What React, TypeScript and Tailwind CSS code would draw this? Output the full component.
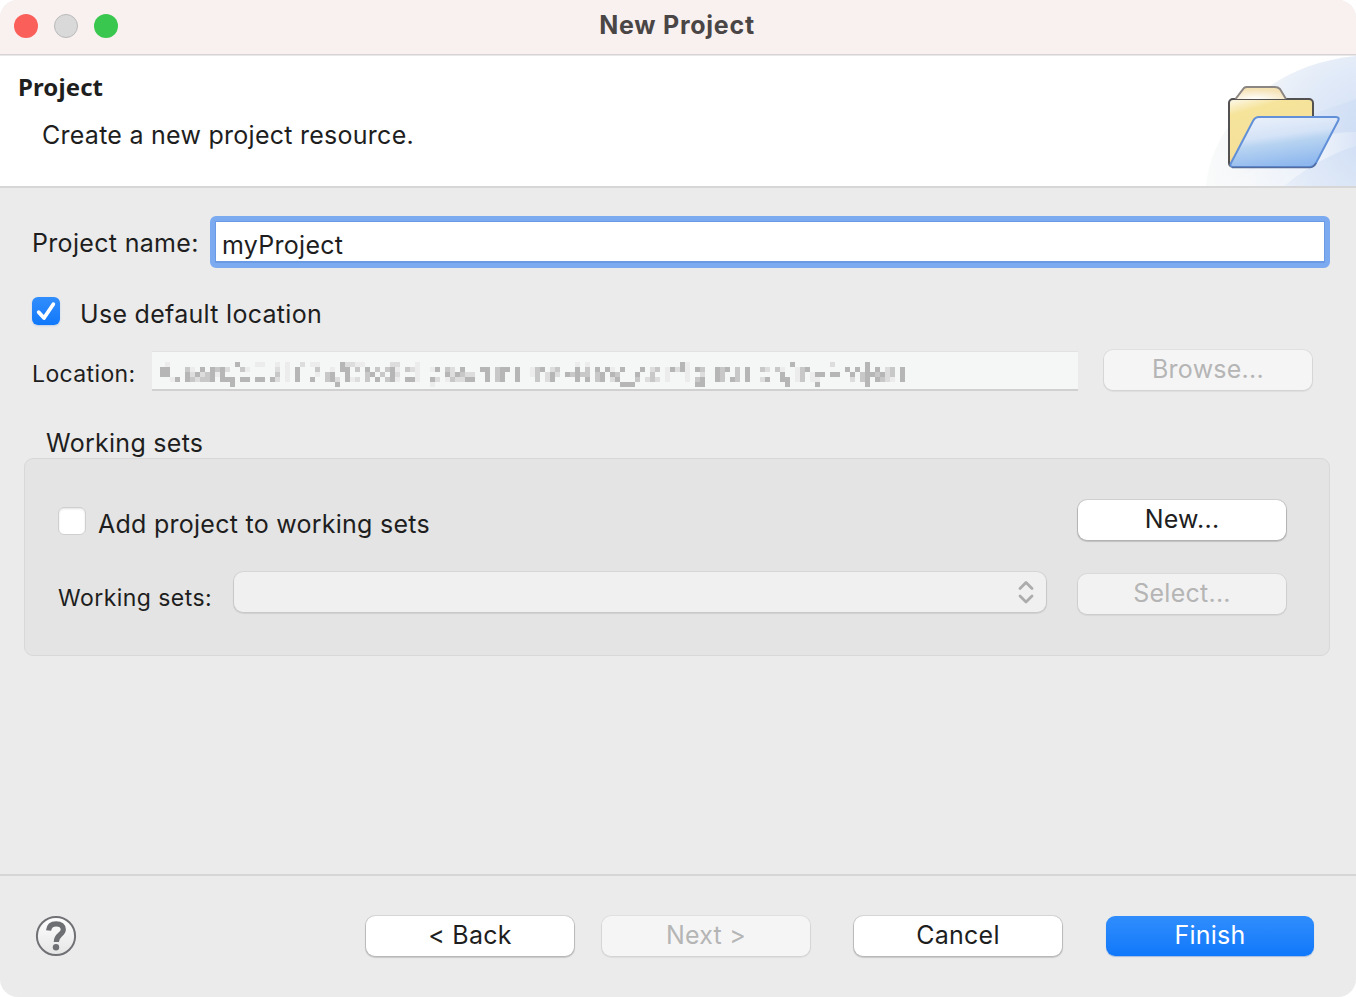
import type { ReactNode } from "react";

type Run = [column: number, length: number, shade: number];

const SHADES = ["", "#ececec", "#dddddd", "#c8c8c8", "#b6b6b6"];

const MOSAIC: Run[][] = [
  [
    [1, 1, 1], [15, 1, 4], [19, 2, 1], [23, 1, 1], [25, 1, 1], [28, 1, 2], [30, 2, 1], [36, 1, 4], [37, 2, 2], [39, 2, 1], [46, 2, 2],
    [51, 1, 1], [83, 1, 1], [85, 1, 1],
    [104, 1, 4], [105, 1, 1], [126, 1, 4], [134, 1, 2], [141, 1, 4],
  ],
  [
    [0, 2, 4], [5, 1, 3], [6, 1, 1], [8, 1, 4], [10, 1, 4], [11, 1, 3], [12, 1, 4], [13, 1, 2], [16, 1, 3], [17, 1, 1], [23, 1, 2], [25, 1, 1], [27, 1, 4], [31, 1, 3], [34, 1, 1], [36, 2, 4], [39, 1, 3], [41, 1, 4], [43, 1, 3], [45, 1, 3], [46, 1, 4], [47, 1, 1], [49, 1, 3],
    [50, 1, 2], [51, 1, 1], [54, 1, 1], [55, 1, 4], [57, 1, 3], [58, 1, 2], [60, 1, 4], [64, 2, 4], [67, 1, 3], [68, 2, 4], [71, 1, 4], [74, 1, 1], [75, 1, 3], [76, 1, 4], [78, 1, 2], [79, 1, 3], [83, 1, 4], [85, 1, 3], [87, 1, 4], [89, 1, 4], [90, 1, 1], [92, 1, 4], [96, 1, 4], [98, 1, 2], [99, 1, 3],
    [101, 1, 1], [102, 1, 4], [103, 1, 2], [104, 1, 4], [105, 1, 1], [107, 1, 4], [108, 1, 3], [111, 1, 4], [112, 1, 3], [113, 1, 4], [115, 1, 3], [117, 1, 4], [120, 1, 3], [121, 1, 2], [123, 1, 3], [124, 1, 1], [127, 1, 1], [128, 1, 3], [129, 1, 4], [137, 1, 4], [139, 1, 4], [141, 1, 4], [143, 1, 4], [145, 1, 2], [146, 1, 3], [148, 1, 4],
  ],
  [
    [0, 2, 4], [5, 1, 4], [6, 1, 2], [7, 1, 4], [8, 1, 2], [9, 1, 3], [10, 1, 4], [11, 1, 1], [12, 1, 4], [23, 1, 3], [25, 1, 1], [27, 1, 4], [31, 1, 1], [33, 1, 3], [34, 1, 4], [37, 1, 4], [41, 1, 3], [42, 1, 4], [44, 1, 3], [46, 1, 4], [47, 1, 2],
    [51, 1, 1], [57, 1, 4], [58, 1, 2], [59, 1, 4], [60, 1, 3], [61, 2, 2], [65, 1, 4], [67, 1, 3], [68, 1, 4], [71, 1, 4], [74, 1, 1], [75, 1, 3], [77, 1, 2], [78, 1, 4], [79, 1, 2], [81, 1, 4], [82, 1, 3], [83, 1, 4], [84, 2, 3], [87, 1, 3], [88, 1, 4], [90, 1, 4], [91, 1, 3], [95, 1, 4], [98, 1, 3],
    [101, 1, 1], [105, 1, 1], [108, 1, 2], [111, 1, 4], [112, 1, 3], [115, 1, 3], [117, 1, 4], [124, 1, 4], [127, 1, 1], [128, 1, 3], [130, 1, 1], [131, 2, 4], [134, 2, 4], [138, 1, 4], [140, 1, 3], [141, 2, 4], [143, 1, 3], [144, 1, 4], [145, 1, 2], [146, 1, 3], [148, 1, 4],
  ],
  [
    [2, 1, 1], [3, 1, 4], [5, 1, 4], [6, 1, 3], [7, 1, 2], [8, 2, 3], [10, 1, 4], [12, 3, 4], [16, 2, 4], [19, 2, 4], [22, 1, 4], [23, 1, 2], [25, 1, 1], [27, 1, 4], [30, 1, 4], [33, 1, 3], [34, 1, 4], [35, 1, 2], [37, 1, 4], [38, 1, 1], [39, 1, 2], [41, 1, 3], [43, 1, 4], [45, 1, 3], [46, 1, 4], [47, 1, 1], [49, 1, 4],
    [50, 1, 4], [51, 1, 1], [54, 1, 4], [55, 1, 2], [57, 1, 1], [58, 1, 3], [59, 2, 2], [61, 2, 4], [65, 1, 4], [67, 1, 3], [68, 1, 4], [71, 1, 4], [75, 1, 3], [77, 1, 2], [78, 1, 4], [83, 1, 4], [85, 1, 4], [87, 1, 3], [88, 1, 4], [90, 1, 2], [91, 1, 4], [95, 1, 3], [97, 1, 2], [98, 1, 3], [99, 1, 2],
    [101, 1, 1], [105, 1, 1], [107, 1, 3], [108, 1, 4], [111, 1, 4], [112, 1, 3], [114, 1, 4], [115, 1, 3], [117, 1, 4], [120, 1, 2], [121, 1, 4], [124, 2, 4], [127, 1, 1], [128, 1, 3], [130, 2, 1], [138, 1, 2], [140, 1, 3], [141, 1, 4], [143, 1, 4], [144, 1, 3], [145, 1, 2], [146, 1, 1], [148, 1, 4],
  ],
  [
    [14, 1, 4], [35, 1, 4], [54, 1, 1], [92, 3, 4], [107, 2, 4], [125, 1, 4], [131, 1, 4], [141, 1, 4],
  ],
];

function RedactedPath() {
  return (
    <svg width="745" height="25" viewBox="0 0 745 25" shapeRendering="crispEdges">
      {MOSAIC.map((runs, row) =>
        runs.map(([column, length, shade]) => (
          <rect key={`${row}-${column}`} x={column * 5} y={row * 5} width={length * 5} height="5" fill={SHADES[shade]} />
        )),
      )}
    </svg>
  );
}

function FolderBanner() {
  return (
    <svg width="150" height="130" viewBox="0 0 150 130">
      <defs>
        <radialGradient id="sky" gradientUnits="userSpaceOnUse" cx="165" cy="85" r="165">
          <stop offset="0.1" stopColor="#d3e0f5" />
          <stop offset="0.45" stopColor="#e1eaf8" />
          <stop offset="0.8" stopColor="#f5f7f9" />
          <stop offset="1" stopColor="#f9fafa" />
        </radialGradient>
        <linearGradient id="beam" x1="0" x2="1" y1="0" y2="0">
          <stop offset="0" stopColor="#d3e0f5" stopOpacity="0" />
          <stop offset="1" stopColor="#cfdef5" />
        </linearGradient>
        <linearGradient id="ray" x1="0" x2="1" y1="0" y2="0">
          <stop offset="0" stopColor="#fff" stopOpacity="0.1" />
          <stop offset="0.7" stopColor="#fff" stopOpacity="0.5" />
          <stop offset="1" stopColor="#fff" stopOpacity="0.15" />
        </linearGradient>
        <linearGradient id="back" x1="0" x2="0.35" y1="0" y2="1">
          <stop offset="0" stopColor="#fdf9ee" />
          <stop offset="0.22" stopColor="#f6e49b" />
          <stop offset="0.75" stopColor="#f6e09a" />
          <stop offset="1" stopColor="#eebd84" />
        </linearGradient>
        <radialGradient id="glow" cx="0.4" cy="1" r="0.8">
          <stop offset="0" stopColor="#fff" />
          <stop offset="1" stopColor="#f5e2b5" />
        </radialGradient>
        <linearGradient id="rim" x1="0" x2="1" y1="0" y2="0">
          <stop offset="0" stopColor="#535052" />
          <stop offset="0.12" stopColor="#c9c5c0" />
          <stop offset="0.3" stopColor="#fbf8f2" />
          <stop offset="0.45" stopColor="#85807c" />
          <stop offset="0.6" stopColor="#535052" />
        </linearGradient>
        <linearGradient id="front" x1="0.2" x2="0.5" y1="0" y2="1">
          <stop offset="0" stopColor="#eaf0fa" />
          <stop offset="0.4" stopColor="#d5e3f7" />
          <stop offset="0.55" stopColor="#b7d3f1" />
          <stop offset="1" stopColor="#8db7ee" />
        </linearGradient>
      </defs>
      <path d="M0 130C4 75 57 9 150 0V130Z" fill="url(#sky)" />
      <path d="M70 71L150 43V76Q120 74 70 92Z" fill="url(#beam)" opacity="0.7" />
      <path d="M55 110Q100 76 150 76V90Q115 100 78 130H20Z" fill="url(#ray)" />
      <rect x="23" y="43" width="84" height="68" rx="4" fill="url(#back)" stroke="#535052" strokeWidth="2" />
      <path d="M27 43H103" stroke="url(#rim)" strokeWidth="2.4" />
      <path d="M29 43L38 32Q39 31 41 31H69Q72 31 74 33L80 43Z" fill="url(#glow)" />
      <path d="M29.5 43L38 32Q39 31 41 31H69Q72 31 74 33L80 43" fill="none" stroke="#8b8583" strokeWidth="2" />
      <path d="M53 61H130Q134 61 132 65L110 107Q108 111 103 111H28Q23 111 25 107L47 65Q49 61 53 61Z" fill="url(#front)" stroke="#6190d8" strokeWidth="2" />
      <path d="M26 111.5H104Q108 111 110 107" fill="none" stroke="#536b9d" strokeWidth="1.5" />
    </svg>
  );
}

function Button({ children, variant = "normal" }: { children: ReactNode; variant?: "normal" | "disabled" | "primary" }) {
  const looks = {
    normal: "bg-white text-[#1e1e1e] shadow-[0_0_0_1px_rgba(0,0,0,0.08),0_1px_1px_1px_rgba(0,0,0,0.15)]",
    disabled: "bg-white/50 text-[#b5b5b5] shadow-[0_0_0_1px_rgba(0,0,0,0.04),0_1px_1px_1px_rgba(0,0,0,0.06)]",
    primary: "bg-linear-to-b from-[#2f8dfc] to-[#0f78fb] text-white shadow-[0_1px_1px_rgba(0,80,200,0.3)]",
  };
  return (
    <button
      className={`h-10 w-[208px] shrink-0 rounded-[9px] pb-px text-[25px] leading-[39px] tracking-[0.25px] ${looks[variant]}`}
    >
      {children}
    </button>
  );
}

export default function App() {
  return (
    <div className="h-[997px] w-[1356px] bg-white">
      <div className="flex h-full flex-col overflow-hidden rounded-[18px] bg-[#ebebeb] font-['Inter',sans-serif] text-[25px] leading-[30px] whitespace-nowrap text-[#1e1e1e]">
        <header className="grid h-[55px] shrink-0 grid-cols-[1fr_auto_1fr] items-start border-b border-[#d5d3d3] bg-[#f9f1f0]">
          <div className="flex gap-4 pt-[14px] pl-[14px]">
            <span className="size-6 rounded-full bg-[#fa5f5a]" />
            <span className="size-6 rounded-full border border-[#b9b9b9] bg-[#d9d9d9]" />
            <span className="size-6 rounded-full bg-[#39c74f]" />
          </div>
          <h1 className="pt-[10px] pr-[2px] font-bold tracking-[0.75px] text-[#4b4646]">New Project</h1>
          <span />
        </header>

        <section className="flex h-[133px] shrink-0 justify-between border-t border-b-2 border-t-[#e9e8e8] border-b-[#d6d6d6] bg-white">
          <div>
            <h2 className="pt-[16px] pl-[18px] font-['Noto_Sans',sans-serif] text-[24px] font-bold tracking-[0.1px]">Project</h2>
            <p className="pt-[18px] pl-[42px] tracking-[0.26px]">Create a new project resource.</p>
          </div>
          <FolderBanner />
        </section>

        <main className="flex h-[688px] shrink-0 flex-col border-b-2 border-[#d5d5d5]">
          <div className="mt-7 flex h-[52px] items-center">
            <label className="w-[210px] pt-px pl-8 tracking-[0.32px]">Project name:</label>
            <div className="h-[52px] w-[1120px] rounded-[6px] border-[5px] border-[#7caaf0] bg-white">
              <div className="h-[42px] border border-b-2 border-[#6a9ae4] pt-[8px] pl-[6px] leading-[30px] tracking-[0.28px]">myProject</div>
            </div>
          </div>

          <div className="mt-[29px] flex h-7 items-center gap-5 pl-8">
            <span className="grid size-7 place-items-center rounded-[6px] bg-linear-to-b from-[#308dfc] to-[#0f78fb] shadow-[0_1px_2px_rgba(0,90,220,0.2)]">
              <svg width="28" height="28" viewBox="0 0 28 28" fill="none" stroke="#fff" strokeWidth="3.8" strokeLinecap="round" strokeLinejoin="round">
                <path d="M6.7 15.2L12 21L21.3 7.2" />
              </svg>
            </span>
            <span className="pt-[6px] tracking-[0.29px]">Use default location</span>
          </div>

          <div className="mt-[25px] flex h-10 items-center">
            <span className="w-[152px] pt-[8px] pl-8 text-[23px] tracking-[0.38px]">Location:</span>
            <div className="mt-[2px] h-10 w-[926px] border-t border-b-2 border-t-[#e2e2e2] border-b-[#d0d0d0] bg-[#f5f6f6] pt-[10px] pl-2">
              <RedactedPath />
            </div>
            <div className="ml-[26px] flex">
              <Button variant="disabled">Browse...</Button>
            </div>
          </div>

          <h3 className="mt-[38px] pl-[46px] tracking-[0.28px]">Working sets</h3>
          <div className="ml-6 flex h-[198px] w-[1306px] flex-col rounded-[9px] border border-[#d8d8d8] bg-[#e4e4e4] pl-[33px]">
            <div className="mt-[41px] flex h-10 items-center">
              <span className="mt-[2px] size-7 rounded-[6px] border border-[#cfcfcf] bg-white shadow-[inset_0_1px_2px_rgba(0,0,0,0.12)]" />
              <span className="w-[992px] pt-[8px] pl-3 tracking-[0.26px]">Add project to working sets</span>
              <Button>New...</Button>
            </div>
            <div className="mt-[34px] flex h-10 items-center">
              <span className="w-[176px] pt-[8px] text-[23px] tracking-[0.45px]">Working sets:</span>
              <div className="-mt-[4px] flex h-10 w-[812px] items-center justify-end rounded-[9px] bg-[#f0f0f0] pr-3 shadow-[0_0_0_1px_rgba(0,0,0,0.05),0_1px_1px_1px_rgba(0,0,0,0.08)]">
                <svg width="16" height="24" viewBox="0 0 16 24" fill="none" stroke="#acacac" strokeWidth="2.8" strokeLinecap="round" strokeLinejoin="round">
                  <path d="M2 8.5L8 2.5L14 8.5M2 16L8 22L14 16" />
                </svg>
              </div>
              <div className="ml-8 flex">
                <Button variant="disabled">Select...</Button>
              </div>
            </div>
          </div>
        </main>

        <footer className="flex flex-1 items-start">
          <svg className="mt-[39px] ml-[35px]" width="42" height="42" viewBox="0 0 42 42">
            <defs>
              <linearGradient id="help" x1="0" x2="0" y1="0" y2="1">
                <stop offset="0" stopColor="#fff" />
                <stop offset="1" stopColor="#e5e5e5" />
              </linearGradient>
            </defs>
            <circle cx="21" cy="21" r="19.1" fill="url(#help)" stroke="#707174" strokeWidth="2" />
            <path d="M13.6 15.5C14 10.8 16.5 8.8 21.2 8.8C25.7 8.8 28.3 11 28.3 14.5C28.3 19.8 21.3 19.6 21.3 27" fill="none" stroke="#6f7074" strokeWidth="5.2" />
            <circle cx="21" cy="32.2" r="3.2" fill="#6f7074" />
          </svg>
          <div className="mt-[40px] ml-[289px] flex">
            <Button>&lt; Back</Button>
            <div className="ml-7 flex">
              <Button variant="disabled">Next &gt;</Button>
            </div>
            <div className="ml-11 flex">
              <Button>Cancel</Button>
            </div>
            <div className="ml-11 flex">
              <Button variant="primary">Finish</Button>
            </div>
          </div>
        </footer>
      </div>
    </div>
  );
}
